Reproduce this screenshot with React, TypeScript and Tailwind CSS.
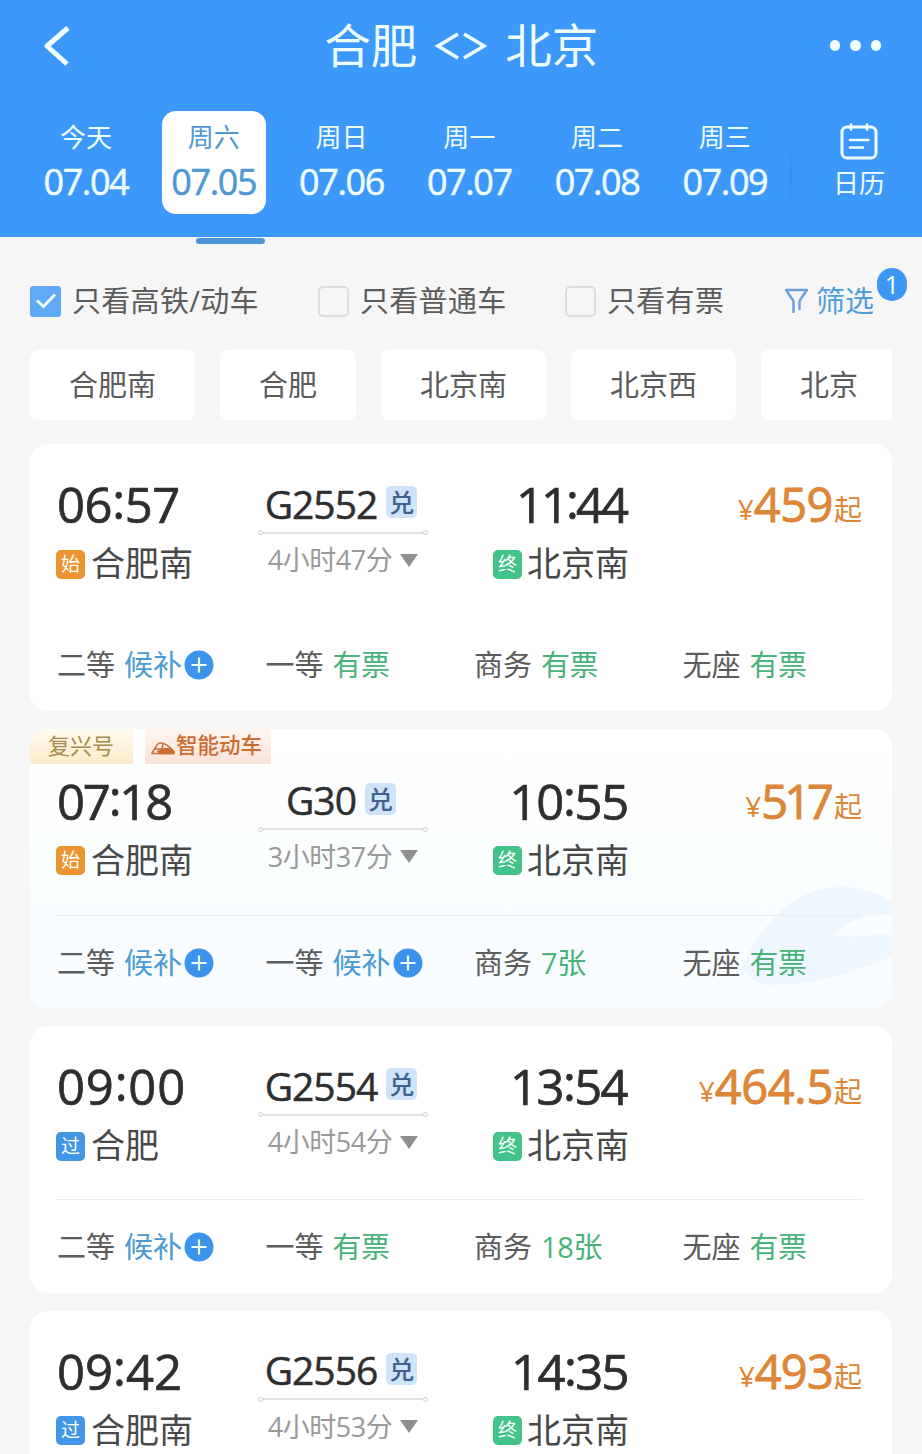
import clsx from 'clsx'

interface Seat {
  label: string
  value: string
  waitlist?: boolean
}

interface Train {
  depart: string
  arrive: string
  from: string
  to: string
  fromTag: '始' | '过'
  code: string
  duration: string
  price: string
  seats: Seat[]
  smart?: boolean
  divider?: boolean
  departTracking: string
  arriveTracking: string
  priceTracking: string
}

const days = [
  { label: '今天', date: '07.04' },
  { label: '周六', date: '07.05' },
  { label: '周日', date: '07.06' },
  { label: '周一', date: '07.07' },
  { label: '周二', date: '07.08' },
  { label: '周三', date: '07.09' },
]

const stations = ['合肥南', '合肥', '北京南', '北京西', '北京']

const trains: Train[] = [
  {
    depart: '06:57',
    arrive: '11:44',
    from: '合肥南',
    to: '北京南',
    fromTag: '始',
    code: 'G2552',
    duration: '4小时47分',
    price: '459',
    departTracking: 'tracking-[-0.4px]',
    arriveTracking: 'tracking-[-3px] pr-[3px]',
    priceTracking: 'tracking-[-0.5px]',
    seats: [
      { label: '二等', value: '候补', waitlist: true },
      { label: '一等', value: '有票' },
      { label: '商务', value: '有票' },
      { label: '无座', value: '有票' },
    ],
  },
  {
    depart: '07:18',
    arrive: '10:55',
    from: '合肥南',
    to: '北京南',
    fromTag: '始',
    code: 'G30',
    duration: '3小时37分',
    price: '517',
    smart: true,
    divider: true,
    departTracking: 'tracking-[-2.2px]',
    arriveTracking: 'tracking-[-1.3px] pr-px',
    priceTracking: 'tracking-[-4px] pr-[3px]',
    seats: [
      { label: '二等', value: '候补', waitlist: true },
      { label: '一等', value: '候补', waitlist: true },
      { label: '商务', value: '7张' },
      { label: '无座', value: '有票' },
    ],
  },
  {
    depart: '09:00',
    arrive: '13:54',
    from: '合肥',
    to: '北京南',
    fromTag: '过',
    code: 'G2554',
    duration: '4小时54分',
    price: '464.5',
    divider: true,
    departTracking: 'tracking-[0.8px]',
    arriveTracking: 'tracking-[-1.6px] pr-[2px]',
    priceTracking: 'tracking-[-0.3px]',
    seats: [
      { label: '二等', value: '候补', waitlist: true },
      { label: '一等', value: '有票' },
      { label: '商务', value: '18张' },
      { label: '无座', value: '有票' },
    ],
  },
  {
    depart: '09:42',
    arrive: '14:35',
    from: '合肥南',
    to: '北京南',
    fromTag: '过',
    code: 'G2556',
    duration: '4小时53分',
    price: '493',
    divider: true,
    departTracking: 'tracking-[0px]',
    arriveTracking: 'tracking-[-1.6px] pr-px',
    priceTracking: 'tracking-[-0.8px]',
    seats: [],
  },
]

function Header() {
  return (
    <header className="h-[237px] bg-[#3c99fb] text-[#f0fdff]">
      <div className="flex h-[91px] items-center justify-between pr-[41px] pl-[43px]">
        <svg width="28" height="40" viewBox="0 0 28 40" fill="none" stroke="currentColor" strokeWidth="5">
          <path d="M25 2 4 20 24 38" strokeLinejoin="round" />
        </svg>
        <h1 className="flex items-center pb-px pl-[22px] text-[46.5px] leading-[60px]">
          <span>合肥</span>
          <svg className="mt-px mr-[17px] ml-[17px]" width="54" height="30" viewBox="0 0 54 30" fill="none" stroke="currentColor" strokeWidth="3.6">
            <path d="M24 3 4 15 24 27M30 3 50 15 30 27" />
          </svg>
          <span>北京</span>
        </h1>
        <div className="flex gap-[10px]">
          <span className="size-[10.5px] rounded-full bg-current" />
          <span className="size-[10.5px] rounded-full bg-current" />
          <span className="size-[10.5px] rounded-full bg-current" />
        </div>
      </div>
      <div className="flex pt-5 pl-[22px]">
        {days.map((d, i) => (
          <div key={d.date} className="flex w-[127.8px] flex-col items-center">
            <div
              className={clsx(
                'flex h-[103px] w-[104px] flex-col items-center rounded-[14px] pt-[7px]',
                i === 1 && 'bg-white text-[#4f97d3]'
              )}
            >
              <span className="text-[26px] leading-[38px]">{d.label}</span>
              <span className="mt-[6px] text-[36px] leading-[40px] tracking-[-1.4px] [-webkit-text-stroke:0.5px]">
                {d.date}
              </span>
            </div>
            {i === 1 && <span className="mt-6 ml-[33px] h-[6px] w-[69px] rounded-full bg-[#4a96d9]" />}
          </div>
        ))}
        <div className="mt-[22px] h-[84px] w-[3px] bg-gradient-to-b from-[#3c99fb] via-[#3791f2] to-[#3c99fb]" />
        <div className="flex flex-1 flex-col items-center pt-3 pl-1">
          <svg width="38" height="37" viewBox="0 0 38 37" fill="none" stroke="currentColor" strokeWidth="3" strokeLinecap="round">
            <path d="M7 4h24a5 5 0 0 1 5 5v21a5 5 0 0 1-5 5H7a5 5 0 0 1-5-5V9a5 5 0 0 1 5-5Z" />
            <path d="M11 1.5v5M27 1.5v5M10 17h18.5M10 24.5h13" strokeWidth="2.6" />
          </svg>
          <span className="mt-1 text-[26px] leading-[38px]">日历</span>
        </div>
      </div>
    </header>
  )
}

function Check({ label, checked, className }: { label: string; checked?: boolean; className?: string }) {
  return (
    <div className={clsx('flex items-center', className)}>
      <span
        className={clsx(
          'flex size-[31px] items-center justify-center',
          checked ? 'rounded-[3px] bg-[#5fa9f7]' : 'rounded-[5px] border-2 border-[#dcdcdc]'
        )}
      >
        {checked && (
          <svg width="22" height="18" viewBox="0 0 22 18" fill="none" stroke="#f2ffff" strokeWidth="3">
            <path d="M2 8.5 8.5 14.5 20 2.5" />
          </svg>
        )}
      </span>
      <span className="ml-[11px] tracking-[0.3px]">{label}</span>
    </div>
  )
}

function Filters() {
  return (
    <div className="flex h-[44px] items-center text-[29px] leading-[44px] text-[#5c5c5c]">
      <Check label="只看高铁/动车" checked className="w-[288px]" />
      <Check label="只看普通车" className="w-[247px]" />
      <Check label="只看有票" className="w-[219px]" />
      <div className="relative flex items-center text-[#4f9edb]">
        <svg width="25" height="28" viewBox="0 0 25 28" fill="none" stroke="#6d9fdc" strokeWidth="2.4" strokeLinejoin="round">
          <path d="M9.5 26V14L2 3h21l-6 8.500q-1.500 2-1.500 4V23" />
        </svg>
        <span className="ml-[7px]">筛选</span>
        <span className="absolute -top-[11px] -right-[33px] flex h-[33px] w-[30px] items-center justify-center rounded-[15px] bg-[#3c97f5] text-[25px] leading-[33px] text-white">
          1
        </span>
      </div>
    </div>
  )
}

function PlusDot() {
  return (
    <svg className="ml-[2px]" width="30" height="30" viewBox="0 0 30 30">
      <circle cx="15" cy="15" r="14.5" fill="#3c93ec" />
      <path d="M15 7.5v15M7.5 15h15" stroke="#f2ffff" strokeWidth="2.2" />
    </svg>
  )
}

function StationTag({ tag }: { tag: string }) {
  return (
    <span
      className={clsx(
        'mt-[2px] flex size-[29px] items-center justify-center rounded-[5px] text-[19px] leading-[29px] text-white',
        tag === '始' && 'bg-[#ec942f]',
        tag === '过' && 'bg-[#4196e6]',
        tag === '终' && 'bg-[#42c38a]'
      )}
    >
      {tag}
    </span>
  )
}

// The colon sits centred on the digits rather than on the baseline.
function Time({ value, tracking }: { value: string; tracking: string }) {
  const [h, m] = value.split(':')
  return (
    <p className={clsx('text-[49px] leading-[60px] text-[#2e2e2e] [-webkit-text-stroke:0.7px]', tracking)}>
      {h}
      <span className="relative -top-[4px]">:</span>
      {m}
    </p>
  )
}

function TrainCard({ train }: { train: Train }) {
  return (
    <article
      className={clsx(
        'relative shrink-0 overflow-hidden rounded-[18px] px-[26px]',
        train.smart ? 'h-[280px] bg-gradient-to-b from-white via-[#fbfeff] to-[#f8fcff]' : 'h-[267px] bg-white'
      )}
    >
      {train.smart && (
        <svg className="absolute right-0 bottom-0" width="150" height="130" viewBox="0 0 150 130">
          <path d="M0 88C22 38 58 8 98 8c24 0 42 8 52 14v56C110 92 80 106 30 106 16 106 4 98 0 88Z" fill="#eff7fe" />
          <path d="M150 36C124 34 102 44 92 56c22 4 40-2 58 0Z" fill="#fafdff" />
        </svg>
      )}
      {train.smart && (
        <div className="-ml-[26px] flex h-[35px] text-[22px] leading-[34px]">
          <span className="w-[103px] bg-gradient-to-b from-[#fffaf0] to-[#fdeac9] pl-[18px] text-[#a68a4c]">
            <span className="relative -top-px">复兴号</span>
          </span>
          <span className="ml-[12px] flex w-[126px] items-center bg-gradient-to-b from-[#fef5f0] to-[#fbe3d8] pl-[5px] font-medium text-[#cc6b33]">
            <svg className="mt-[5px]" width="26" height="15" viewBox="0 0 26 15" fill="none" stroke="currentColor" strokeWidth="1.5">
              <path d="M2 12 7 4Q8 2 11 2c5 0 9 4 13 8.500Q24.500 12.500 22 12.500H2Z" />
              <path d="M5 8h7l1-5.500M13 8h7" />
              <path d="M8 10.500 13 8h7l4 3v1.500H10Z" fill="currentColor" />
            </svg>
            <span className="relative -top-px text-[21.5px]">智能动车</span>
          </span>
        </div>
      )}
      <div className={clsx('relative flex', train.smart ? 'pt-[7px]' : 'pt-[30px]')}>
        <div className="w-[202px]">
          <div className="pl-px">
            <Time value={train.depart} tracking={train.departTracking} />
          </div>
          <div className="mt-[7px] flex h-[44px] items-center text-[34px] leading-[44px] text-[#484848]">
            <StationTag tag={train.fromTag} />
            <span className="ml-[6px]">{train.from}</span>
          </div>
        </div>
        <div className="w-[170px]">
          <div className="flex h-[56px] items-center justify-center pr-1">
            <span className="pt-[3px] text-[39px] leading-[50px] tracking-[-1px] text-[#2e2e2e] [-webkit-text-stroke:0.5px]">
              {train.code}
            </span>
            <span className="ml-[9px] flex h-[32px] w-[31px] items-center justify-center rounded-[5px] bg-[#cfe3fa] text-[25px] leading-[30px] font-medium text-[#40618d]">
              兑
            </span>
          </div>
          <div className="flex items-center">
            <span className="size-[5px] rounded-full border border-[#cfcfcf]" />
            <span className="h-[2px] flex-1 bg-[#e2e2e2]" />
            <span className="size-[5px] rounded-full border border-[#cfcfcf]" />
          </div>
          <div className="mt-[5px] flex h-[40px] items-center justify-center text-[27px] leading-[40px] text-[#999]">
            <span className="tracking-[-0.5px]">{train.duration}</span>
            <svg className="ml-[8px]" width="18" height="13" viewBox="0 0 18 13" fill="#8f8f8f">
              <path d="M0 0h18L9 13Z" />
            </svg>
          </div>
        </div>
        <div className="flex w-[201px] flex-col items-end">
          <Time value={train.arrive} tracking={train.arriveTracking} />
          <div className="mt-[7px] flex h-[44px] items-center text-[34px] leading-[44px] text-[#484848]">
            <StationTag tag="终" />
            <span className="ml-[5px]">{train.to}</span>
          </div>
        </div>
        <p className="flex-1 pr-[4px] text-right text-[28px] leading-[60px] text-[#dd8638]">
          <span className="relative -top-[2px]">¥</span>
          <span className={clsx('text-[47px] [-webkit-text-stroke:0.9px]', train.priceTracking)}>{train.price}</span>
          <span className="relative -top-[2px] ml-px">起</span>
        </p>
      </div>
      <div
        className={clsx('relative mr-[3px] h-px', train.smart ? 'mt-[33px]' : 'mt-[32px]', train.divider && 'bg-[#ececec]')}
      />
      <div className="relative flex h-[94px] items-center pl-px text-[29px] leading-[44px] text-[#5c5c5c]">
        {train.seats.map((s) => (
          <div key={s.label} className="flex w-[208.5px] shrink-0 items-center">
            <span>{s.label}</span>
            <span className={clsx('ml-[9px]', s.waitlist ? 'text-[#4b9bd2]' : 'tracking-[-0.4px] text-[#4ab27a]')}>
              {s.value}
            </span>
            {s.waitlist && <PlusDot />}
          </div>
        ))}
      </div>
    </article>
  )
}

export default function App() {
  return (
    <div className="h-[1454px] w-[922px] overflow-hidden bg-[#f6f6f7] font-['Open_Sans','Noto_Sans_CJK_SC',sans-serif]">
      <Header />
      <main className="px-[30px] pt-[42px]">
        <Filters />
        <div className="mt-[27px] flex gap-[25px] overflow-hidden text-[29px] leading-[70px] text-[#5c5c5c]">
          {stations.map((s) => (
            <span key={s} className="shrink-0 rounded-lg bg-white px-[39px]">
              {s}
            </span>
          ))}
        </div>
        <div className="mt-6 flex flex-col gap-[17.5px]">
          {trains.map((t) => (
            <TrainCard key={t.code} train={t} />
          ))}
        </div>
      </main>
    </div>
  )
}
